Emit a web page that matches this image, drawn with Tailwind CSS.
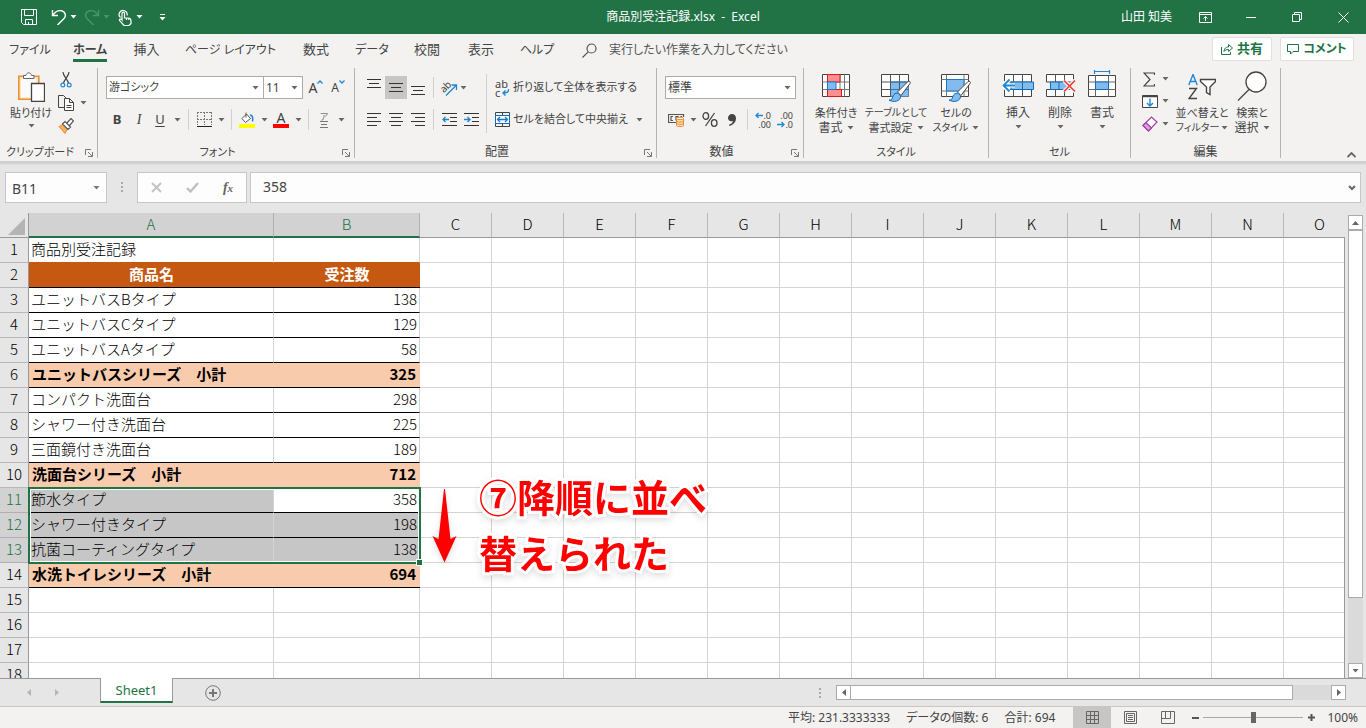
<!DOCTYPE html>
<html lang="ja">
<head>
  <meta charset="UTF-8" />
  <meta name="viewport" content="width=device-width, initial-scale=1.0" />
  <title>商品別受注記録.xlsx - Excel</title>
  <script src="https://cdn.jsdelivr.net/npm/@tailwindcss/browser@4"></script>
  <style>
    body {
      font-family: 'Noto Sans', 'Noto Sans CJK JP', sans-serif;
      font-feature-settings: 'palt';
    }
    .sheet {
      font-family: 'Noto Sans CJK JP', sans-serif;
      font-feature-settings: normal;
    }
  </style>
</head>
<body class="h-screen flex flex-col overflow-hidden bg-[#e6e6e6] text-[#444] text-xs">

  <svg class="hidden">
    <symbol id="down" viewBox="0 0 7 4"><path d="M0.5 0h6L3.5 3.5z" fill="currentColor"/></symbol>
    <symbol id="launcher" viewBox="0 0 8 8"><path d="M.5 6V.5H6M3 3l4 4M7.5 3v4.5H3" fill="none" stroke="#777"/></symbol>
  </svg>

  <!-- タイトルバー -->
  <header class="h-[34px] shrink-0 bg-[#217346] text-white grid grid-cols-[1fr_auto_1fr] items-center">
    <div class="flex items-center pl-[18px]">
      <button aria-label="上書き保存" class="w-[22px] flex justify-center mr-2">
        <svg class="w-4 h-4" viewBox="0 0 16 16" fill="none" stroke="currentColor"><path d="M.5.5h15v15h-13l-2-2zM3.5.5v6h9v-6M4.5 15.5v-5h7v5M7.5 13v2.5"/></svg>
      </button>
      <button aria-label="元に戻す" class="w-[22px] flex justify-center">
        <svg class="w-4 h-4" viewBox="0 0 16 16" fill="none" stroke="currentColor" stroke-width="1.4"><path d="M1.500 1v5.500H7M1.800 6.200C4 3 7 1 10.500 1.800c4 1 5 5 2.500 7.700L6.500 16"/></svg>
      </button>
      <svg class="w-[7px] h-1 mr-1"><use href="#down"/></svg>
      <button aria-label="やり直し" class="w-[22px] flex justify-center text-[#4d9270]">
        <svg class="w-4 h-4" viewBox="0 0 16 16" fill="none" stroke="currentColor" stroke-width="1.4"><path d="M14.500 1v5.500H9M14.200 6.200C12 3 9 1 5.500 1.800c-4 1-5 5-2.500 7.700L9.500 16"/></svg>
      </button>
      <svg class="w-[7px] h-1 mr-1 text-[#4d9270]"><use href="#down"/></svg>
      <button aria-label="タッチ/マウス モードの切り替え" class="w-[22px] flex justify-center">
        <svg class="w-4 h-[17px]" viewBox="0 0 16 17" fill="none" stroke="currentColor" stroke-width="1.2"><path d="M3.500 8.500A4 4 0 1 1 10 6.500M5 11V4.500c0-1.800 2.500-1.800 2.500 0V9h3.800c2.200 0 2.700 1 2.700 3v2.500L12 16.500H7L2.500 11.500c-.5-1.500 1.500-2 2.500-.5zM9.500 9v2M11.800 9v2"/></svg>
      </button>
      <svg class="w-[7px] h-1"><use href="#down"/></svg>
      <button aria-label="クイック アクセス ツール バーのユーザー設定" class="ml-4 flex flex-col items-center gap-[2px]">
        <span class="w-[5px] h-px bg-white"></span>
        <svg class="w-[7px] h-1"><use href="#down"/></svg>
      </button>
    </div>
    <h1 class="whitespace-pre">商品別受注記録.xlsx  -  Excel</h1>
    <div class="flex items-center justify-end">
      <span class="pr-[10px]">山田 知美</span>
      <button aria-label="リボンの表示オプション" class="w-[46px] flex justify-center">
        <svg class="w-[13px] h-[11px]" viewBox="0 0 13 11" fill="none" stroke="currentColor"><path d="M.5.5h12v10H.5zM.5 2.500h12M6.500 9V4.500M4.500 6.500l2-2 2 2"/></svg>
      </button>
      <button aria-label="最小化" class="w-[46px] flex justify-center"><span class="w-[10px] h-px bg-white"></span></button>
      <button aria-label="元に戻す (縮小)" class="w-[46px] flex justify-center">
        <svg class="w-[10px] h-[10px]" viewBox="0 0 10 10" fill="none" stroke="currentColor"><path d="M.5 2.500h7v7h-7zM2.500 2.500v-2h7v7h-2"/></svg>
      </button>
      <button aria-label="閉じる" class="w-[46px] flex justify-center">
        <svg class="w-[11px] h-[11px]" viewBox="0 0 11 11" stroke="currentColor"><path d="M.5.5l10 10M10.500.5l-10 10"/></svg>
      </button>
    </div>
  </header>

  <!-- リボン タブ -->
  <nav class="h-[34px] shrink-0 bg-[#f3f2f1] flex items-start">
    <button class="w-[60px] h-[32px]">ファイル</button>
    <button class="w-[60px] h-[32px] flex justify-center"><span class="h-[28px] leading-[32px] font-bold border-b-3 border-[#217346]">ホーム</span></button>
    <button class="w-[53px] h-[32px] text-[13px]">挿入</button>
    <button class="w-[115px] h-[32px]">ページ レイアウト</button>
    <button class="w-[56px] h-[32px] text-[13px]">数式</button>
    <button class="w-[56px] h-[32px]">データ</button>
    <button class="w-[54px] h-[32px] text-[13px]">校閲</button>
    <button class="w-[54px] h-[32px] text-[13px]">表示</button>
    <button class="w-[58px] h-[32px]">ヘルプ</button>
    <label class="flex-1 h-[32px] flex items-center pl-4">
      <svg class="w-[15px] h-[15px] mr-3" viewBox="0 0 15 15" fill="none" stroke="#555" stroke-width="1.2"><circle cx="9.5" cy="5.5" r="4.5"/><path d="M6.200 8.800L.5 14.500"/></svg>
      <input type="text" aria-label="操作アシスト" placeholder="実行したい作業を入力してください" class="w-56 bg-transparent placeholder-[#555] outline-none" />
    </label>
    <div class="flex gap-2 pr-3 pt-[3px] text-[#217346] font-bold text-[13px]">
      <button class="w-[60px] h-[24px] flex items-center justify-center gap-1 bg-white border border-[#e1dfdd] rounded-xs">
        <svg class="w-3 h-3" viewBox="0 0 12 12" fill="none" stroke="currentColor"><path d="M.5 4v7.500h9V9M3 8.500C3.500 5 5 4 7.500 4V1.500L11.500 5 7.500 8.500V6.500C5.500 6.500 4 7 3 8.500z"/></svg>
        共有
      </button>
      <button class="w-[74px] h-[24px] flex items-center justify-center gap-1 bg-white border border-[#e1dfdd] rounded-xs">
        <svg class="w-3 h-3" viewBox="0 0 12 12" fill="none" stroke="currentColor"><path d="M.5 1.500h11v7H6l-2.500 2.500V8.500h-3z"/></svg>
        <span class="text-xs">コメント</span>
      </button>
    </div>
  </nav>

  <!-- リボン -->
  <div class="h-[93px] shrink-0 bg-[#f3f2f1] flex pb-[3px] whitespace-nowrap">

    <section class="w-[98px] shrink-0 flex flex-col justify-between border-r border-[#b5b3b1]">
      <div class="flex pl-2">
        <button class="w-[46px] h-[68px] flex flex-col items-center pt-1">
          <svg class="w-7 h-[30px] mb-[3px] shrink-0" viewBox="0 0 28 30" fill="none"><path d="M1.800 4.300h20v23h-20z" fill="#fbe3b8" stroke="#eb9133" stroke-width="1.6"/><path d="M4 6.500h15.500v19H4z" fill="#fafafa"/><path d="M6.500 6.500v-3h2.500c.5-3.500 5-3.500 5.500 0H17v3z" fill="#fff" stroke="#666"/><path d="M14.500 11.500h13v18h-13z" fill="#fff" stroke="#444" stroke-width="1.3"/></svg>
          <span class="text-[11px] leading-[15px]">貼り付け</span>
          <svg class="w-[7px] h-1 mt-1 shrink-0 text-[#666]"><use href="#down"/></svg>
        </button>
        <div class="w-[22px] ml-px flex flex-col">
          <button aria-label="切り取り" class="h-[23px] flex items-center justify-center">
            <svg class="w-3 h-4" viewBox="0 0 12 16" fill="none" stroke-width="1.2"><path d="M3 0c0 4 4.500 7 5.500 11M9 0c0 4-4.500 7-5.500 11" stroke="#444"/><circle cx="2.8" cy="13" r="1.9" stroke="#1e88d2"/><circle cx="9.2" cy="13" r="1.9" stroke="#1e88d2"/></svg>
          </button>
          <button aria-label="コピー" class="h-[23px] flex items-center justify-center">
            <svg class="w-4 h-4" viewBox="0 0 16 16" fill="none" stroke="#444"><path d="M6 12.500H.5V.5h5l3 3"/><path d="M6.500 3.500h5l4 4v8h-9zM11.500 3.500v4h4M8.500 10.500h5M8.500 12.500h5" fill="#fff"/></svg>
          </button>
          <button aria-label="書式のコピー/貼り付け" class="h-[23px] flex items-center justify-center">
            <svg class="w-4 h-4" viewBox="0 0 16 16" fill="none"><path d="M1 8.500l4-2 4.500 4.500-2.500 4.500z" fill="#f9b15f" stroke="#eb8a2c"/><path d="M4.500 6l2.500-2.500 5.500 5.500-2.500 2.500zM9 5l4-4.500L15.500 3l-4 4.500" fill="#fff" stroke="#555" stroke-width="1.2"/></svg>
          </button>
        </div>
        <button aria-label="コピーのオプション" class="w-3 h-[69px] flex items-center justify-center text-[#666]"><svg class="w-[7px] h-1"><use href="#down"/></svg></button>
      </div>
      <div class="flex items-center">
        <h2 class="flex-1 text-center text-[11px] leading-3">クリップボード</h2>
        <button aria-label="クリップボードの設定" class="w-[17px] pt-[2px]"><svg class="w-2 h-2 mx-auto"><use href="#launcher"/></svg></button>
      </div>
    </section>

    <section class="w-[257px] shrink-0 flex flex-col justify-between border-r border-[#b5b3b1] pt-2">
      <div class="flex flex-col gap-[9px] pl-2">
        <div class="flex h-[23px] items-center">
          <div class="w-[158px] h-[23px] flex items-center bg-white border border-[#ababab] pr-1">
            <select aria-label="フォント" class="flex-1 appearance-none pl-[2px] text-[11px] outline-none"><option>游ゴシック</option></select>
            <svg class="w-[7px] h-1 text-[#666]"><use href="#down"/></svg>
          </div>
          <div class="w-[40px] h-[23px] -ml-px flex items-center justify-between bg-white border border-[#ababab] pr-1">
            <select aria-label="フォント サイズ" class="w-6 appearance-none pl-[2px] text-xs outline-none"><option>11</option></select>
            <svg class="w-[7px] h-1 text-[#666]"><use href="#down"/></svg>
          </div>
          <button aria-label="フォント サイズの拡大" class="w-[22px] ml-[2px] flex justify-center items-start"><span class="text-sm leading-4">A</span><svg class="w-[6px] h-1" viewBox="0 0 6 4" fill="none" stroke="#1e88d2" stroke-width="1.3"><path d="M.5 3.500L3 1l2.500 2.500"/></svg></button>
          <button aria-label="フォント サイズの縮小" class="w-[22px] flex justify-center items-start"><span class="text-xs leading-4">A</span><svg class="w-[6px] h-1" viewBox="0 0 6 4" fill="none" stroke="#1e88d2" stroke-width="1.3"><path d="M.5.5L3 3 5.500.5"/></svg></button>
        </div>
        <div class="flex h-[23px] items-center text-[#444]">
          <button class="w-[22px] text-[13px] font-bold">B</button>
          <button class="w-[22px] text-sm italic font-[Liberation_Serif]">I</button>
          <button class="w-[20px] text-[13px] underline underline-offset-2">U</button>
          <button aria-label="下線のオプション" class="w-[14px] flex justify-center text-[#666]"><svg class="w-[7px] h-1"><use href="#down"/></svg></button>
          <span class="w-px h-[21px] mx-1 bg-[#d2d0ce]"></span>
          <button aria-label="罫線" class="w-[22px] flex justify-center">
            <svg class="w-[15px] h-[15px]" viewBox="0 0 15 15" fill="none" stroke="#777"><path d="M.5 0v13M7.500 0v13M14.500 0v13M0 .5h15M0 7.500h15" stroke-dasharray="2 1"/><path d="M0 14.500h15" stroke="#222"/></svg>
          </button>
          <button aria-label="罫線のオプション" class="w-3 flex justify-center text-[#666]"><svg class="w-[7px] h-1"><use href="#down"/></svg></button>
          <span class="w-px h-[21px] mx-1 bg-[#d2d0ce]"></span>
          <button aria-label="塗りつぶしの色" class="w-[22px] flex justify-center">
            <svg class="w-4 h-4" viewBox="0 0 16 16" fill="none"><path d="M7 .5v5M3 6.500l4.500-4.500 4 4.500L6.500 10.500z" stroke="#555" fill="#fff"/><path d="M11 3c3 0 3 4 2.500 6.500" stroke="#1e88d2" stroke-width="1.6"/><path d="M0 12h16v4H0z" fill="#ff0"/></svg>
          </button>
          <button aria-label="塗りつぶしの色のオプション" class="w-3 flex justify-center text-[#666]"><svg class="w-[7px] h-1"><use href="#down"/></svg></button>
          <button aria-label="フォントの色" class="w-[22px] flex flex-col items-center"><span class="text-sm leading-[13px]">A</span><span class="w-4 h-1 bg-[#f00]"></span></button>
          <button aria-label="フォントの色のオプション" class="w-3 flex justify-center text-[#666]"><svg class="w-[7px] h-1"><use href="#down"/></svg></button>
          <span class="w-px h-[21px] mx-1 bg-[#d2d0ce]"></span>
          <button aria-label="ふりがなの表示/非表示" class="w-[22px] flex flex-col items-center text-[#777]"><span class="text-[9px] leading-[9px]">ア</span><svg class="w-2 h-[7px]" viewBox="0 0 8 7" stroke="#777"><path d="M0 .5h8M1 3.500h6M0 6.500h8"/></svg></button>
          <button aria-label="ふりがなのオプション" class="w-3 flex justify-center text-[#666]"><svg class="w-[7px] h-1"><use href="#down"/></svg></button>
        </div>
      </div>
      <div class="flex items-center">
        <h2 class="flex-1 text-center text-[11px] leading-3">フォント</h2>
        <button aria-label="フォントの設定" class="w-[17px] pt-[2px]"><svg class="w-2 h-2 mx-auto"><use href="#launcher"/></svg></button>
      </div>
    </section>

    <section class="w-[302px] shrink-0 flex flex-col justify-between border-r border-[#b5b3b1]">
      <div class="flex pl-2">
        <div class="flex flex-col gap-[9px] pt-2">
          <div class="flex h-[23px] items-center">
            <button aria-label="上揃え" class="w-[22px] h-[23px] flex justify-center pt-[3px]"><svg class="w-[14px] h-[9px]" viewBox="0 0 14 9" stroke="#333"><path d="M0 .5h14M2 4.500h10M0 8.500h14"/></svg></button>
            <button aria-label="上下中央揃え" class="w-[22px] h-[23px] flex justify-center items-center bg-[#c8c6c4]"><svg class="w-[14px] h-[9px]" viewBox="0 0 14 9" stroke="#333"><path d="M0 .5h14M2 4.500h10M0 8.500h14"/></svg></button>
            <button aria-label="下揃え" class="w-[22px] h-[23px] flex justify-center items-end pb-1"><svg class="w-[14px] h-[9px]" viewBox="0 0 14 9" stroke="#333"><path d="M0 .5h14M2 4.500h10M0 8.500h14"/></svg></button>
            <span class="w-px h-[21px] mx-1 bg-[#d2d0ce]"></span>
            <button aria-label="方向" class="w-[34px] flex items-center gap-[2px] pl-[2px] text-[#666]">
              <svg class="w-[18px] h-[18px] overflow-visible" viewBox="0 0 18 18" fill="none"><text x="0" y="11" transform="rotate(-45 6 8)" font-size="10" fill="#444">ab</text><path d="M6 16.500L16 6.500M11.500 6h5v5" stroke="#1e88d2" stroke-width="1.3"/></svg>
              <svg class="w-[7px] h-1"><use href="#down"/></svg>
            </button>
          </div>
          <div class="flex h-[23px] items-center">
            <button aria-label="左揃え" class="w-[22px] flex justify-center"><svg class="w-[14px] h-[13px]" viewBox="0 0 14 13" stroke="#333"><path d="M0 .5h14M0 4.500h10M0 8.500h14M0 12.500h10"/></svg></button>
            <button aria-label="中央揃え" class="w-[22px] flex justify-center"><svg class="w-[14px] h-[13px]" viewBox="0 0 14 13" stroke="#333"><path d="M0 .5h14M2 4.500h10M0 8.500h14M2 12.500h10"/></svg></button>
            <button aria-label="右揃え" class="w-[22px] flex justify-center"><svg class="w-[14px] h-[13px]" viewBox="0 0 14 13" stroke="#333"><path d="M0 .5h14M4 4.500h10M0 8.500h14M4 12.500h10"/></svg></button>
            <span class="w-px h-[21px] mx-1 bg-[#d2d0ce]"></span>
            <button aria-label="インデントを減らす" class="w-[22px] flex justify-center"><svg class="w-[15px] h-[13px]" viewBox="0 0 15 13" fill="none" stroke="#333"><path d="M0 .5h15M8 4.500h7M8 8.500h7M0 12.500h15"/><path d="M1 6.500h6M3.500 4L1 6.500 3.500 9" stroke="#1e88d2" stroke-width="1.4"/></svg></button>
            <button aria-label="インデントを増やす" class="w-[22px] flex justify-center"><svg class="w-[15px] h-[13px]" viewBox="0 0 15 13" fill="none" stroke="#333"><path d="M0 .5h15M8 4.500h7M8 8.500h7M0 12.500h15"/><path d="M0 6.500h6M3.500 4L6 6.500 3.500 9" stroke="#1e88d2" stroke-width="1.4"/></svg></button>
          </div>
        </div>
        <span class="w-px h-[59px] mt-[6px] mx-1 bg-[#d2d0ce]"></span>
        <div class="flex flex-col gap-[9px] pt-2 text-[11px]">
          <button class="h-[23px] flex items-center">
            <span class="relative w-[22px] h-[18px] pl-1 flex flex-col items-start text-[11px]">
              <span class="leading-[9px]">ab</span>
              <span class="leading-[9px]">c</span>
              <svg class="absolute right-[3px] bottom-0 w-2 h-2" viewBox="0 0 8 8" fill="none"><path d="M6.500 0c.5 3-1.500 4-5.500 4M3.500 1.500L1 4l2.500 2.500" stroke="#1e88d2" stroke-width="1.4"/></svg>
            </span>
            折り返して全体を表示する
          </button>
          <div class="h-[23px] flex items-center">
            <button class="flex items-center">
              <span class="w-[22px] flex justify-center"><svg class="w-[15px] h-[15px]" viewBox="0 0 15 15" fill="none"><path d="M.5.5h14v14H.5zM7.500.5v4M7.500 11v4" stroke="#444"/><path d="M.5 3.500h14v8H.5z" fill="#fff" stroke="#0f6cbd"/><path d="M2.500 7.500h10M5 5L2.500 7.500 5 10M10 5l2.500 2.500L10 10" stroke="#1e78c8" stroke-width="1.3"/></svg></span>
              セルを結合して中央揃え
            </button>
            <button aria-label="セル結合のオプション" class="w-6 flex justify-center text-[#666]"><svg class="w-[7px] h-1"><use href="#down"/></svg></button>
          </div>
        </div>
      </div>
      <div class="flex items-center">
        <h2 class="flex-1 text-center leading-3">配置</h2>
        <button aria-label="配置の設定" class="w-[17px] pt-[2px]"><svg class="w-2 h-2 mx-auto"><use href="#launcher"/></svg></button>
      </div>
    </section>

    <section class="w-[147px] shrink-0 flex flex-col justify-between border-r border-[#b5b3b1] pt-2">
      <div class="flex flex-col gap-[9px] pl-2">
        <div class="w-[131px] h-[23px] flex items-center bg-white border border-[#ababab] pr-1">
          <select aria-label="表示形式" class="flex-1 appearance-none pl-[2px] outline-none"><option>標準</option></select>
          <svg class="w-[7px] h-1 text-[#666]"><use href="#down"/></svg>
        </div>
        <div class="flex h-[23px] items-center">
          <button aria-label="通貨表示形式" class="w-[22px] flex justify-center">
            <svg class="w-[17px] h-[14px]" viewBox="0 0 17 14" fill="none"><path d="M8 9.500H.5v-8h15V4M5 3.500H3v4h2M8 7.500v-4h2v2M12.500 3.500h1.500" stroke="#555" stroke-width="1.2"/><path d="M8.500 5.500v7c0 1.300 7 1.300 7 0v-7" fill="#fbe3c4" stroke="#eb8a2c"/><ellipse cx="12" cy="5.5" rx="3.5" ry="1.2" fill="#fff" stroke="#eb8a2c"/><path d="M8.500 8c0 1.300 7 1.300 7 0M8.500 10.300c0 1.300 7 1.300 7 0" stroke="#eb8a2c"/></svg>
          </button>
          <button aria-label="通貨表示形式のオプション" class="w-3 flex justify-center text-[#666]"><svg class="w-[7px] h-1"><use href="#down"/></svg></button>
          <button aria-label="パーセント スタイル" class="w-[22px] flex justify-center"><svg class="w-4 h-[15px]" viewBox="0 0 16 15" fill="none" stroke="#444" stroke-width="1.3"><ellipse cx="3.8" cy="4" rx="2.8" ry="3.3"/><ellipse cx="12.2" cy="11" rx="2.8" ry="3.3"/><path d="M12.500 1L3.500 14"/></svg></button>
          <button aria-label="桁区切りスタイル" class="w-[22px] flex justify-center"><svg class="w-2 h-3" viewBox="0 0 8 12" fill="#444"><path d="M4 0c2.500 0 4 1.700 4 4.300C8 8 5.500 11 1.500 12l-.5-1.200C3.300 10 4.700 8.700 5 7 2 8 0 6.300 0 4 0 1.700 1.700 0 4 0z"/></svg></button>
          <span class="w-px h-[21px] mx-1 bg-[#d2d0ce]"></span>
          <button aria-label="小数点以下の表示桁数を増やす" class="w-[22px] flex flex-col items-end pr-[3px] text-[9px]">
            <span class="flex items-center leading-[9px]"><svg class="w-2 h-[7px]" viewBox="0 0 8 7" fill="none" stroke="#1e88d2" stroke-width="1.3"><path d="M1 3.500h7M3.500 1L1 3.500 3.500 6"/></svg>.0</span>
            <span class="leading-[9px]">.00</span>
          </button>
          <button aria-label="小数点以下の表示桁数を減らす" class="w-[22px] flex flex-col items-end pr-[3px] text-[9px]">
            <span class="leading-[9px]">.00</span>
            <span class="flex items-center leading-[9px]"><svg class="w-2 h-[7px]" viewBox="0 0 8 7" fill="none" stroke="#1e88d2" stroke-width="1.3"><path d="M0 3.500h7M4.500 1L7 3.500 4.500 6"/></svg>.0</span>
          </button>
        </div>
      </div>
      <div class="flex items-center">
        <h2 class="flex-1 text-center leading-3">数値</h2>
        <button aria-label="表示形式の設定" class="w-[17px] pt-[2px]"><svg class="w-2 h-2 mx-auto"><use href="#launcher"/></svg></button>
      </div>
    </section>

    <section class="w-[185px] shrink-0 flex flex-col justify-between border-r border-[#b5b3b1]">
      <div class="flex pl-[2px]">
        <button class="w-[60px] flex flex-col items-center pt-[6px] leading-[15px]">
          <svg class="w-7 h-[30px] mb-px" viewBox="0 0 28 30" fill="none"><path d="M.5.5h27v22H.5z" fill="#fff" stroke="#444"/><path d="M.5 8h27M.5 15.500h27M5.500.5v22M18 .5v22M22.500.5v22" stroke="#777"/><path d="M5.500.5h12.500v7.500H5.500zM5.500 15.500h14v7h-14z" fill="#ff8f8f" stroke="#d9191c"/><path d="M5.500 8h8.500v7.500H5.500z" fill="#83bcec" stroke="#1e78c8"/></svg>
          <span class="text-[11px]">条件付き</span>
          <span class="flex items-center gap-1">書式<svg class="w-[7px] h-1 text-[#666]"><use href="#down"/></svg></span>
        </button>
        <button class="w-[60px] flex flex-col items-center pt-[6px] leading-[15px]">
          <svg class="w-[30px] h-[30px] mb-px" viewBox="0 0 30 30" fill="none"><path d="M.5.5h27v22H.5z" fill="#fff" stroke="#444"/><path d="M9.500 8h18v14.500h-18z" fill="#83bcec"/><path d="M.5 8h27M.5 15.500h27M9.500.5v22M18.500.5v22" stroke="#555"/><path d="M9.500 8h18M9.500 15.500h18" stroke="#1e78c8"/><path d="M16.500 18L27 7.500c1.500-1 3 .5 2 2L20 21.500z" fill="#fff" stroke="#444"/><path d="M8 26c3 .5 3-1 4-4 2-4.500 7-3 7.500.5C19.500 27 13 29 8 26z" fill="#83bcec" stroke="#0f6cbd"/></svg>
          <span class="text-[10px]">テーブルとして</span>
          <span class="flex items-center gap-1 text-[11px]">書式設定<svg class="w-[7px] h-1 text-[#666]"><use href="#down"/></svg></span>
        </button>
        <button class="w-[60px] flex flex-col items-center pt-[6px] leading-[15px]">
          <svg class="w-[30px] h-[30px] mb-px" viewBox="0 0 30 30" fill="none"><path d="M.5.5h27v22H.5z" fill="#fff" stroke="#444"/><path d="M.5 5.500h27M.5 17h27M5.500.5v22M23 .5v22" stroke="#777"/><path d="M5.500 5.500H23V17H5.500z" fill="#83bcec" stroke="#1e78c8"/><path d="M16.500 18L27 7.500c1.500-1 3 .5 2 2L20 21.500z" fill="#fff" stroke="#444"/><path d="M8 26c3 .5 3-1 4-4 2-4.500 7-3 7.500.5C19.500 27 13 29 8 26z" fill="#83bcec" stroke="#0f6cbd"/></svg>
          <span class="text-[11px]">セルの</span>
          <span class="flex items-center gap-1 text-[10px] leading-[15px]">スタイル<svg class="w-[7px] h-1 text-[#666]"><use href="#down"/></svg></span>
        </button>
      </div>
      <h2 class="text-center text-[11px] leading-3">スタイル</h2>
    </section>

    <section class="w-[142px] shrink-0 flex flex-col justify-between border-r border-[#b5b3b1]">
      <div class="flex pl-2">
        <button class="w-[42px] flex flex-col items-center pt-[2px] leading-[15px]">
          <svg class="w-8 h-[34px] mb-px" viewBox="0 0 32 34" fill="none"><path d="M2.500 4.500h27v22h-27z" fill="#fff" stroke="#444"/><path d="M2.500 19.500h27M11.500 4.500v22M20.500 4.500v22M2.500 12h27" stroke="#555"/><path d="M9 12h22.500v7.500H9zM20.500 12v7.500" fill="#83bcec" stroke="#0f6cbd"/><path d="M7.500 9L1 15.500 7.500 22M1 15.500h12" stroke="#fff" stroke-width="4"/><path d="M7.500 9.500L1.500 15.500l6 6M2 15.500h11" stroke="#1e88d2" stroke-width="1.8"/></svg>
          <span>挿入</span>
          <svg class="w-[7px] h-1 mt-[5px] text-[#666]"><use href="#down"/></svg>
        </button>
        <button class="w-[42px] flex flex-col items-center pt-[2px] leading-[15px]">
          <svg class="w-8 h-[34px] mb-px" viewBox="0 0 32 34" fill="none"><path d="M2.500 4.500h27v7.500h-27zM2.500 19.500h27v7h-27z" fill="#fff" stroke="#444"/><path d="M11.500 4.500V12M20.500 4.500V12M11.500 19.500v7M20.500 19.500v7" stroke="#555"/><path d="M6.500 12H20l3 3.500-3 4H6.500zM15 12v7.500" fill="#83bcec" stroke="#0f6cbd"/><path d="M20 10.500l11 11M31 10.500l-11 11" stroke="#f3f2f1" stroke-width="4"/><path d="M20 10.500l11 11M31 10.500l-11 11" stroke="#ee3b3b" stroke-width="1.6"/></svg>
          <span>削除</span>
          <svg class="w-[7px] h-1 mt-[5px] text-[#666]"><use href="#down"/></svg>
        </button>
        <button class="w-[42px] flex flex-col items-center pt-[2px] leading-[15px]">
          <svg class="w-8 h-[34px] mb-px" viewBox="0 0 32 34" fill="none"><path d="M8.500 0v4M23.500 0v4M8.500 1.500h15" stroke="#1e88d2" stroke-width="1.2"/><path d="M2.500 5.500h27v21h-27z" fill="#fff" stroke="#444"/><path d="M2.500 12h27M2.500 19.500h27M9.500 5.500v21M22.500 5.500v21" stroke="#666"/><path d="M9.500 12h13v7.500h-13z" fill="#83bcec" stroke="#0f6cbd"/></svg>
          <span>書式</span>
          <svg class="w-[7px] h-1 mt-[5px] text-[#666]"><use href="#down"/></svg>
        </button>
      </div>
      <h2 class="text-center text-[11px] leading-3">セル</h2>
    </section>

    <section class="w-[150px] shrink-0 flex flex-col justify-between border-r border-[#b5b3b1]">
      <div class="flex pl-2">
        <div class="w-[34px] flex flex-col text-[#666]">
          <button aria-label="合計" class="h-[22px] flex items-center gap-[7px] pl-1">
            <svg class="w-3 h-[15px]" viewBox="0 0 12 15" fill="none" stroke="#444" stroke-width="1.2"><path d="M11.500 3V1H1l6 6.500L1 14h10.500v-2"/></svg>
            <svg class="w-[7px] h-1"><use href="#down"/></svg>
          </button>
          <button aria-label="フィル" class="h-[22px] flex items-center gap-1 pl-[3px]">
            <svg class="w-4 h-[15px]" viewBox="0 0 16 15" fill="none"><path d="M.5 1.500h15v12H.5z" fill="#fff" stroke="#444"/><path d="M.5 2.500h15" stroke="#444" stroke-width="1.5"/><path d="M8 4.500V12M5 9l3 3 3-3" stroke="#1e88d2" stroke-width="1.4"/></svg>
            <svg class="w-[7px] h-1"><use href="#down"/></svg>
          </button>
          <button aria-label="クリア" class="h-[23px] flex items-center gap-1 pl-[3px]">
            <svg class="w-4 h-4" viewBox="0 0 16 16" fill="none" stroke="#a33ea8" stroke-width="1.2"><path d="M1 9.500L9.500 1 15 6 6.500 15z" fill="#fff"/><path d="M1 9.500l3-3L9.500 12l-3 3z" fill="#d9a0dc"/></svg>
            <svg class="w-[7px] h-1"><use href="#down"/></svg>
          </button>
        </div>
        <button class="w-[58px] flex flex-col items-center pt-[6px] leading-[15px]">
          <svg class="w-7 h-[30px] mb-px" viewBox="0 0 28 30" fill="none" stroke-width="1.4"><path d="M.8 11L5 .5 9.200 11M2.300 7.500h5.400" stroke="#1e88d2"/><path d="M1 14.500h7.500L1 24.500h8" stroke="#444"/><path d="M12.500 5.500h15v2L22 13v7.500l-3.500-2V13l-6-5.500z" fill="#fff" stroke="#444"/></svg>
          <span class="text-[11px]">並べ替えと</span>
          <span class="flex items-center gap-[2px] text-[10px]">フィルター<svg class="w-[7px] h-1 text-[#666]"><use href="#down"/></svg></span>
        </button>
        <button class="w-[42px] flex flex-col items-center pt-[3px] leading-[15px]">
          <svg class="w-[30px] h-[33px] mb-px" viewBox="0 0 30 33" fill="none" stroke="#444" stroke-width="1.3"><circle cx="19" cy="11" r="10" fill="#fff"/><path d="M12 18.500L1 29.500"/></svg>
          <span class="text-[11px]">検索と</span>
          <span class="flex items-center gap-1">選択<svg class="w-[7px] h-1 text-[#666]"><use href="#down"/></svg></span>
        </button>
      </div>
      <h2 class="text-center leading-3">編集</h2>
    </section>

    <div class="flex-1 flex items-end justify-end pr-[10px]">
      <button aria-label="リボンを折りたたむ"><svg class="w-[9px] h-[6px]" viewBox="0 0 9 6" fill="none" stroke="#666" stroke-width="1.8"><path d="M.5 5l4-4 4 4"/></svg></button>
    </div>
  </div>

  <!-- 数式バー -->
  <div class="h-[52px] shrink-0 flex items-start pt-[11px] px-[5px] shadow-[inset_0_4px_2px_-1px_#cfcfcf]">
    <div class="w-[102px] h-[31px] flex items-center bg-[#fdfdfd] border border-[#c6c6c6] pr-[6px]">
      <input aria-label="名前ボックス" value="B11" class="flex-1 min-w-0 pl-[6px] pt-[2px] text-sm outline-none" />
      <svg class="w-[7px] h-1 text-[#777]"><use href="#down"/></svg>
    </div>
    <svg class="w-[2px] h-[10px] mt-[10px] mx-[14px]" viewBox="0 0 2 10" fill="#aaa"><path d="M0 0h2v2H0zM0 4h2v2H0zM0 8h2v2H0z"/></svg>
    <div class="w-[110px] h-[31px] flex items-center bg-[#fdfdfd] border border-[#c6c6c6]">
      <button aria-label="キャンセル" class="flex-1 flex justify-center"><svg class="w-[11px] h-[11px]" viewBox="0 0 11 11" stroke="#c0c0c0" stroke-width="1.8"><path d="M1 1l9 9M10 1l-9 9"/></svg></button>
      <button aria-label="入力" class="flex-1 flex justify-center"><svg class="w-[13px] h-[11px]" viewBox="0 0 13 11" fill="none" stroke="#c0c0c0" stroke-width="2.4"><path d="M1 6l3.500 3.500L12 1"/></svg></button>
      <button class="flex-1 italic font-bold text-sm font-[Liberation_Serif] text-[#666]">f<span class="text-[11px]">x</span></button>
    </div>
    <div class="flex-1 h-[31px] ml-[3px] flex items-center bg-[#fdfdfd] border border-[#c6c6c6] pr-1">
      <input aria-label="数式バー" value="358" class="flex-1 min-w-0 pl-3 pb-[2px] text-sm outline-none" />
      <button aria-label="数式バーの展開"><svg class="w-2 h-[6px]" viewBox="0 0 8 6" fill="none" stroke="#666" stroke-width="2"><path d="M1 1l3 3 3-3"/></svg></button>
    </div>
  </div>

  <!-- ワークシート -->
  <main class="flex-1 min-h-0 flex">
    <div class="sheet relative flex-1 min-w-0 overflow-hidden text-[15px] leading-[22px] font-light text-black">
      <table class="table-fixed w-[1356px] border-separate border-spacing-0">
        <thead><tr id="col-heads"></tr></thead>
        <tbody id="rows"></tbody>
      </table>

      <!-- 選択範囲 -->
      <div class="absolute left-[28px] top-[274px] w-[393px] h-[77px] border-2 border-[#217346] shadow-[inset_0_0_0_1px_white]"></div>
      <div class="absolute left-[416px] top-[346px] w-[7px] h-[7px] bg-[#217346] border border-white"></div>

      <!-- 吹き出し -->
      <svg class="absolute left-[430px] top-[272px] w-[30px] h-[82px] drop-shadow-md" viewBox="0 0 30 82"><path d="M14 4h1L20.500 54l6-3L14.500 77.500 2.500 51l6 3z" fill="#f00"/></svg>
      <p class="absolute left-[479px] top-[255px] text-[38px] leading-[56px] font-bold text-[#f00] [-webkit-text-stroke:6px_white] [paint-order:stroke_fill] drop-shadow-md">⑦降順に並べ<br />替えられた</p>
    </div>
    <div class="w-px mt-6 bg-[#999]"></div>
    <div class="w-[21px] flex flex-col items-center pt-[2px]">
      <button aria-label="上へスクロール" class="w-[15px] h-[15px] flex items-center justify-center bg-white border border-[#ababab]"><svg class="w-[7px] h-1" viewBox="0 0 7 4"><path d="M0 4h7L3.500 0z" fill="#666"/></svg></button>
      <div class="flex-1 w-[15px] bg-[#dadada]"><div class="h-[85%] bg-white border border-[#ababab]"></div></div>
      <button aria-label="下へスクロール" class="w-[15px] h-[15px] flex items-center justify-center bg-white border border-[#ababab]"><svg class="w-[7px] h-1 text-[#666]"><use href="#down"/></svg></button>
    </div>
  </main>

  <!-- シート見出し -->
  <div class="h-[28px] shrink-0 flex items-start">
    <div class="w-[100px] h-[28px] flex items-center gap-6 pl-[27px] border-t border-[#999]">
      <button aria-label="前のシート"><svg class="w-1 h-[7px]" viewBox="0 0 4 7"><path d="M4 0v7L0 3.500z" fill="#b5b5b5"/></svg></button>
      <button aria-label="次のシート"><svg class="w-1 h-[7px]" viewBox="0 0 4 7"><path d="M0 0v7l4-3.500z" fill="#b5b5b5"/></svg></button>
    </div>
    <button class="w-[73px] h-[25px] pt-[2px] bg-white border-x border-x-[#999] border-b-2 border-b-[#217346] text-[13px] text-[#217346]">Sheet1</button>
    <div class="flex-1 h-[28px] flex items-center border-t border-[#999] pl-8">
      <button aria-label="新しいシート"><svg class="w-4 h-4" viewBox="0 0 16 16" fill="none" stroke="#777"><circle cx="8" cy="8" r="7.3"/><path d="M8 4v8M4 8h8" stroke-width="2"/></svg></button>
      <div class="ml-auto w-[547px] flex items-center pr-5">
        <svg class="w-[2px] h-[10px] mr-[15px]" viewBox="0 0 2 10" fill="#aaa"><path d="M0 0h2v2H0zM0 4h2v2H0zM0 8h2v2H0z"/></svg>
        <button aria-label="左へスクロール" class="w-[15px] h-[15px] flex items-center justify-center bg-white border border-[#ababab]"><svg class="w-1 h-[7px]" viewBox="0 0 4 7"><path d="M4 0v7L0 3.500z" fill="#666"/></svg></button>
        <div class="flex-1 h-[15px] bg-[#dadada]"><div class="w-[92%] h-[15px] bg-white border border-l-0 border-[#ababab]"></div></div>
        <button aria-label="右へスクロール" class="w-[15px] h-[15px] flex items-center justify-center bg-white border border-[#ababab]"><svg class="w-1 h-[7px]" viewBox="0 0 4 7"><path d="M0 0v7l4-3.500z" fill="#666"/></svg></button>
      </div>
    </div>
  </div>

  <!-- ステータス バー -->
  <footer class="h-[22px] shrink-0 flex items-center justify-end bg-[#f3f2f1] border-t border-[#c6c6c6] pr-2">
    <span class="mr-4">平均: 231.3333333</span>
    <span class="mr-4">データの個数: 6</span>
    <span class="mr-[18px]">合計: 694</span>
    <button aria-label="標準" class="w-[38px] h-[21px] flex items-center justify-center bg-[#c8c6c4]"><svg class="w-[13px] h-[13px]" viewBox="0 0 13 13" fill="none" stroke="#666"><path d="M.5.5h12v12H.5zM4.500.5v12M8.500.5v12M.5 4.500h12M.5 8.500h12"/></svg></button>
    <button aria-label="ページ レイアウト" class="w-[38px] flex justify-center"><svg class="w-[13px] h-[13px]" viewBox="0 0 13 13" fill="none" stroke="#666"><path d="M.5.5h12v12H.5zM2.500 2.500h8v8h-8zM4 4.500h5M4 6.500h5M4 8.500h5"/></svg></button>
    <button aria-label="改ページ プレビュー" class="w-[38px] flex justify-center"><svg class="w-[14px] h-[13px]" viewBox="0 0 14 13" fill="none" stroke="#666"><path d="M.5.5h13v12H.5zM4.500.5v7M9.500.5v7M.5 7.500h9"/></svg></button>
    <button aria-label="縮小" class="w-4 flex justify-center"><span class="w-[7px] h-[2px] bg-[#555]"></span></button>
    <input type="range" min="0" max="200" value="100" aria-label="ズーム" class="w-[100px] h-[13px] appearance-none bg-[linear-gradient(#a8a8a8,#a8a8a8)] bg-[length:100%_1px] bg-center bg-no-repeat [&::-webkit-slider-thumb]:appearance-none [&::-webkit-slider-thumb]:w-[5px] [&::-webkit-slider-thumb]:h-[11px] [&::-webkit-slider-thumb]:bg-[#666]" />
    <button aria-label="拡大" class="w-4 flex justify-center"><svg class="w-[7px] h-[7px]" viewBox="0 0 7 7" stroke="#555" stroke-width="2"><path d="M3.500 0v7M0 3.500h7"/></svg></button>
    <span class="ml-2">100%</span>
  </footer>

  <script>
    // kind: title, head, item, sum
    const data = [
      ["title", "商品別受注記録", ""],
      ["head", "商品名", "受注数"],
      ["item", "ユニットバスBタイプ", 138],
      ["item", "ユニットバスCタイプ", 129],
      ["item", "ユニットバスAタイプ", 58],
      ["sum", "ユニットバスシリーズ　小計", 325],
      ["item", "コンパクト洗面台", 298],
      ["item", "シャワー付き洗面台", 225],
      ["item", "三面鏡付き洗面台", 189],
      ["sum", "洗面台シリーズ　小計", 712],
      ["item", "節水タイプ", 358],
      ["item", "シャワー付きタイプ", 198],
      ["item", "抗菌コーティングタイプ", 138],
      ["sum", "水洗トイレシリーズ　小計", 694]
    ];

    const styles = {
      title: ["pl-[2px] border-r border-b border-r-[#d4d4d4] border-b-[#c55911]", "border-r border-b border-r-[#d4d4d4] border-b-[#c55911]"],
      head: ["bg-[#c55911] text-white text-center font-bold border-b border-black", "bg-[#c55911] text-white text-center font-bold border-b border-black"],
      item: ["pl-[2px] border-r border-b border-r-[#d4d4d4] border-b-black", "pr-[2px] text-right border-r border-b border-r-[#d4d4d4] border-b-black"],
      sum: ["pl-[3px] bg-[#f8cbad] font-bold border-b border-black", "pr-1 text-right bg-[#f8cbad] font-bold border-b border-black"],
      empty: ["border-r border-b border-[#d4d4d4]", "border-r border-b border-[#d4d4d4]"]
    };

    const heads = document.getElementById("col-heads");
    heads.innerHTML = '<th class="w-[29px] h-[25px] p-0 bg-[#e6e6e6] border-r border-b border-[#999]"><svg class="w-[17px] h-[17px] ml-2 mt-[2px]" viewBox="0 0 17 17"><path d="M17 0v17H0z" fill="#b4b4b4"/></svg></th>';
    for (const c of "ABCDEFGHIJKLMNO") {
      const th = document.createElement("th");
      th.textContent = c;
      th.className = "w-[72px] h-[25px] p-0 align-top font-light bg-[#e6e6e6] border-r border-b border-r-[#b8b8b8] border-b-[#999]";
      if (c === "A") th.className = "w-[245px] h-[25px] p-0 align-top font-light bg-[#d2d2d2] text-[#217346] border-r border-b-2 border-r-[#b0b0b0] border-b-[#217346]";
      if (c === "B") th.className = "w-[146px] h-[25px] p-0 align-top font-light bg-[#d2d2d2] text-[#217346] border-r border-b-2 border-r-[#b0b0b0] border-b-[#217346]";
      heads.appendChild(th);
    }

    const rows = document.getElementById("rows");
    for (let n = 1; n <= 18; n++) {
      const [kind, name, count] = data[n - 1] || ["empty", "", ""];
      const selected = n >= 11 && n <= 13;
      const tr = document.createElement("tr");
      const th = document.createElement("th");
      th.textContent = n;
      th.className = selected
        ? "h-[25px] p-0 align-top font-light bg-[#d2d2d2] text-[#217346] border-r border-b border-r-[#999] border-b-[#b0b0b0]"
        : "h-[25px] p-0 align-top font-light bg-[#e6e6e6] border-r border-b border-r-[#999] border-b-[#b8b8b8]";
      tr.appendChild(th);
      for (let c = 0; c < 15; c++) {
        const td = document.createElement("td");
        td.className = c < 2 ? "h-[25px] align-top whitespace-nowrap " + styles[kind][c] : "h-[25px] bg-white border-r border-b border-[#d4d4d4]";
        if (c === 0) td.textContent = name;
        if (c === 1) td.textContent = count;
        if (c < 2 && (kind === "title" || kind === "item" || kind === "empty")) {
          const active = n === 11 && c === 1;
          td.className += selected && !active ? " bg-[#c6c6c6]" : " bg-white";
        }
        tr.appendChild(td);
      }
      rows.appendChild(tr);
    }
  </script>
</body>
</html>
